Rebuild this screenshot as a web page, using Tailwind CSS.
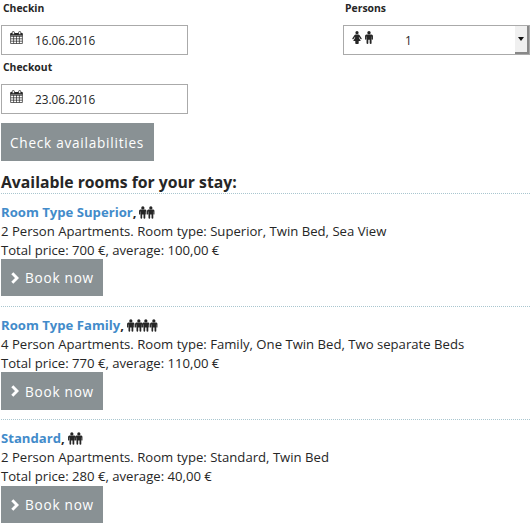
<!DOCTYPE html>
<html lang="en">
<head>
<meta charset="utf-8">
<title>Available rooms</title>
<script src="https://cdn.jsdelivr.net/npm/@tailwindcss/browser@4"></script>
</head>
<body class="w-[530px] h-[525px] overflow-hidden bg-white font-['Open_Sans','Noto_Sans',sans-serif] text-[13.13px] leading-[19px] text-[#262626]">
<svg class="hidden">
  <symbol id="calendar" viewBox="0 0 13 13">
    <path d="M.6 3h11.8v9.5H.6zM.6 5.4h11.8M.6 7.8h11.8M.6 10.2h11.8M3.6 5v7.5M6.5 5v7.5M9.4 5v7.5" fill="none" stroke="currentColor" stroke-width=".7"/>
    <path d="M.4 2h12.2v2.6H.4z" fill="currentColor"/>
    <rect x="2.2" y=".5" width="2.2" height="3" rx="1" fill="#fff" stroke="currentColor" stroke-width=".8"/>
    <rect x="8.6" y=".5" width="2.2" height="3" rx="1" fill="#fff" stroke="currentColor" stroke-width=".8"/>
  </symbol>
  <symbol id="male" viewBox="0 0 8 13">
    <circle cx="4" cy="1.7" r="1.7" fill="currentColor"/>
    <path d="M1.5 3.4h5Q7.950 3.400 7.950 5v3.100q0 .6-.6.600t-.6-.6V5.500h-.2v6.800q0 .7-.8.700T4.700 12.300V8.700H3.300v3.600q0 .7-.8.700t-.95-.7V5.500h-.3v2.600q0 .6-.6.600t-.6-.6V5Q.050 3.400 1.500 3.400z" fill="currentColor"/>
  </symbol>
  <symbol id="female" viewBox="0 0 10 13">
    <circle cx="5" cy="1.7" r="1.6" fill="currentColor"/>
    <path d="M3.6 3.6h2.8q.7 0 1.2.7l2 3q.3.6-.2.9t-.9-.2L6.9 5.7v1l1.900 3.200H6.700v2.400q0 .7-.7.700H4q-.7 0-.7-.7V9.900H1.200L3.100 6.700v-1L1.500 8q-.4.500-.9.200t-.2-.9l2-3q.5-.7 1.200-.7z" fill="currentColor"/>
  </symbol>
  <symbol id="chevron" viewBox="0 0 8 12">
    <path d="M1.300 1.300 6 6l-4.700 4.700" fill="none" stroke="currentColor" stroke-width="2.900"/>
  </symbol>
</svg>

<form class="h-[174px] pl-px">
  <div class="flex justify-between">
    <div class="w-[187px]">
      <label class="block h-[25px] pl-[2px] text-[10.4px] leading-[16px] font-bold">Checkin</label>
      <div class="flex items-center h-[30px] border border-[#aaa] pl-[8px]">
        <svg class="w-[13px] h-[13px] mb-[5px]"><use href="#calendar"/></svg>
        <span class="ml-[12px] text-[11.8px]">16.06.2016</span>
      </div>
    </div>
    <div class="w-[187px]">
      <label class="block h-[25px] pl-[2px] text-[10.4px] leading-[16px] font-bold">Persons</label>
      <div class="flex items-center h-[30px] border border-[#aaa] pl-[8px]">
        <svg class="w-[10px] h-[13px] mb-[5px]"><use href="#female"/></svg>
        <svg class="w-[8px] h-[13px] ml-[3px] mb-[5px]"><use href="#male"/></svg>
        <span class="ml-[32px] text-[11.8px]">1</span>
        <div class="ml-auto flex items-center justify-center w-[14px] h-[28px] bg-[#f0f0f0] border-r-2 border-b-2 border-[#888]">
          <svg class="w-[6px] h-[4px]" viewBox="0 0 6 4"><path d="M0 0h6L3 4z" fill="#111"/></svg>
        </div>
      </div>
    </div>
  </div>
  <div class="w-[187px]">
    <label class="block h-[29px] pt-[4px] pl-[2px] text-[10.4px] leading-[16px] font-bold">Checkout</label>
    <div class="flex items-center h-[30px] border border-[#aaa] pl-[8px]">
      <svg class="w-[13px] h-[13px] mb-[5px]"><use href="#calendar"/></svg>
      <span class="ml-[12px] text-[11.8px]">23.06.2016</span>
    </div>
  </div>
  <button type="button" class="mt-[9px] block w-[153px] h-[38px] bg-[#899194] text-left pl-[9px] text-[13.6px] tracking-[0.75px] whitespace-nowrap text-white">Check availabilities</button>
</form>

<h2 class="h-[19px] pl-px text-[15.75px] leading-[17px] font-bold whitespace-nowrap">Available rooms for your stay:</h2>

<section class="ml-px h-[113px] border-t border-dotted border-[#a9c6cf] pt-[9px]">
  <h3 class="flex h-[19px] font-bold"><span class="text-[#428bca]">Room Type Superior</span>,<span class="flex ml-[3px] pt-[3px]"><svg class="w-[7.7px] h-[13px]"><use href="#male"/></svg><svg class="w-[7.7px] h-[13px]"><use href="#male"/></svg></span></h3>
  <p class="whitespace-nowrap">2 Person Apartments. Room type: Superior, Twin Bed, Sea View</p>
  <p class="h-[18px]">Total price: 700 €, average: 100,00 €</p>
  <button type="button" class="flex items-center w-[102px] h-[37px] pl-[10px] bg-[#899194] text-[13.6px] tracking-[0.75px] whitespace-nowrap text-white"><svg class="w-[8px] h-[12px] mr-[6px]"><use href="#chevron"/></svg>Book now</button>
</section>
<section class="ml-px h-[113px] border-t border-dotted border-[#a9c6cf] pt-[9px]">
  <h3 class="flex h-[19px] font-bold"><span class="text-[#428bca]">Room Type Family</span>,<span class="flex ml-[3px] pt-[3px]"><svg class="w-[7.7px] h-[13px]"><use href="#male"/></svg><svg class="w-[7.7px] h-[13px]"><use href="#male"/></svg><svg class="w-[7.7px] h-[13px]"><use href="#male"/></svg><svg class="w-[7.7px] h-[13px]"><use href="#male"/></svg></span></h3>
  <p class="whitespace-nowrap">4 Person Apartments. Room type: Family, One Twin Bed, Two separate Beds</p>
  <p class="h-[18px]">Total price: 770 €, average: 110,00 €</p>
  <button type="button" class="flex items-center w-[102px] h-[38px] pl-[10px] bg-[#899194] text-[13.6px] tracking-[0.75px] whitespace-nowrap text-white"><svg class="w-[8px] h-[12px] mr-[6px]"><use href="#chevron"/></svg>Book now</button>
</section>
<section class="ml-px border-t border-dotted border-[#a9c6cf] pt-[9px]">
  <h3 class="flex h-[19px] font-bold"><span class="text-[#428bca]">Standard</span>,<span class="flex ml-[3px] pt-[3px]"><svg class="w-[7.7px] h-[13px]"><use href="#male"/></svg><svg class="w-[7.7px] h-[13px]"><use href="#male"/></svg></span></h3>
  <p class="whitespace-nowrap">2 Person Apartments. Room type: Standard, Twin Bed</p>
  <p>Total price: 280 €, average: 40,00 €</p>
  <button type="button" class="flex items-center w-[102px] h-[37px] pl-[10px] bg-[#899194] text-[13.6px] tracking-[0.75px] whitespace-nowrap text-white"><svg class="w-[8px] h-[12px] mr-[6px]"><use href="#chevron"/></svg>Book now</button>
</section>
</body>
</html>
